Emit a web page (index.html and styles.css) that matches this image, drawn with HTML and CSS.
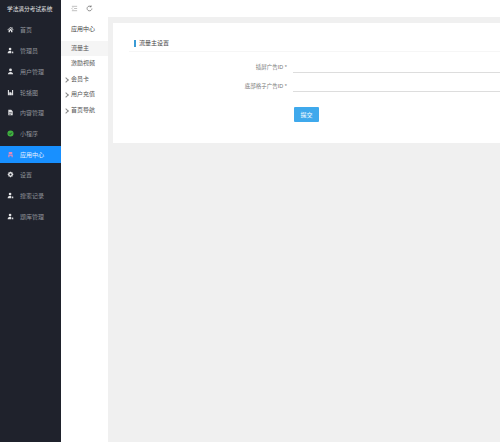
FILE: index.html
```html
<!DOCTYPE html>
<html lang="zh-CN">
<head>
    <meta charset="UTF-8">
    <title>流量主设置</title>
    <link rel="stylesheet" href="styles.css">
</head>
<body>
    <div class="container">
        <div class="sidebar">
            <div class="brand">学法满分考试系统</div>
            <a href="#" class="menu-item">
                <svg viewBox="0 0 16 16"><path d="M8 2 1 8.500l1 1L8 4l6 5.500 1-1-2.500-2.300V3h-2v1.400zM3.500 10v4.500h3.300v-3.400h2.400v3.400h3.300V10L8 5.800z"/></svg>
                <span>首页</span>
            </a>
            <a href="#" class="menu-item">
                <svg viewBox="0 0 16 16"><circle cx="7" cy="4.500" r="3"/><path d="M1.500 14c0-3.500 2-5.500 5.500-5.500 1 0 1.800.2 2.500.5v5zM11 10h3.500v1H13v1h1.500v2.500H11z"/></svg>
                <span>管理员</span>
            </a>
            <a href="#" class="menu-item">
                <svg viewBox="0 0 16 16"><circle cx="8" cy="4.500" r="3.200"/><path d="M2 14.500c0-3.500 2.500-5.500 6-5.500s6 2 6 5.500z"/></svg>
                <span>用户管理</span>
            </a>
            <a href="#" class="menu-item">
                <svg viewBox="0 0 16 16"><path d="M2 2h2.500v12H2zM11.500 2H14v12h-2.500zM5 9l1.500-3L8 8l1-1.500L11 10v4H5z"/></svg>
                <span>轮播图</span>
            </a>
            <a href="#" class="menu-item">
                <svg viewBox="0 0 16 16"><path d="M3 1.500h6.500L13 5v9.500H3zM5 7v1h6V7zm0 2.500v1h6v-1zM5 12v1h4v-1z"/></svg>
                <span>内容管理</span>
            </a>
            <a href="#" class="menu-item">
                <svg viewBox="0 0 16 16"><circle cx="8" cy="8" r="7" fill="#3fb33f"/><path d="m4.800 8.200 2.200 2.200 4-4.400" fill="none" stroke="#1f222c" stroke-width="1.800"/></svg>
                <span>小程序</span>
            </a>
            <a href="#" class="menu-item active">
                <svg viewBox="0 0 16 16"><path fill="#e889b5" d="M4 2h8v5H4zM3 8h10v6h-2.500v-3h-5v3H3z"/></svg>
                <span>应用中心</span>
            </a>
            <a href="#" class="menu-item">
                <svg viewBox="0 0 16 16"><path fill-rule="evenodd" d="m6.700 1.500h2.600l.4 2 1.700-1 1.900 1.900-1 1.700 2 .4v2.600l-2 .4 1 1.700-1.900 1.900-1.700-1-.4 2H6.700l-.4-2-1.700 1-1.900-1.900 1-1.700-2-.4V6.500l2-.4-1-1.700 1.900-1.900 1.700 1zM8 5.700a2.300 2.300 0 1 0 0 4.600 2.300 2.300 0 0 0 0-4.600z"/></svg>
                <span>设置</span>
            </a>
            <a href="#" class="menu-item">
                <svg viewBox="0 0 16 16"><circle cx="7" cy="4.500" r="3"/><path d="M1.500 14c0-3.500 2-5.500 5.500-5.500 1 0 1.800.2 2.500.5v5zM11 10h3.500v1H13v1h1.500v2.500H11z"/></svg>
                <span>搜索记录</span>
            </a>
            <a href="#" class="menu-item">
                <svg viewBox="0 0 16 16"><circle cx="7" cy="4.500" r="3"/><path d="M1.500 14c0-3.500 2-5.500 5.500-5.500 1 0 1.800.2 2.500.5v5zM11 10h3.500v1H13v1h1.500v2.500H11z"/></svg>
                <span>题库管理</span>
            </a>
        </div>

        <div class="main">
            <div class="topbar">
                <svg class="tool" viewBox="0 0 16 16"><path d="M2 3h12M7 8h7M2 13h12M4.500 5.500 2 8l2.500 2.500" fill="none" stroke="#888" stroke-width="1.200"/></svg>
                <svg class="tool" viewBox="0 0 16 16"><path d="M13.500 8A5.500 5.500 0 1 1 11.500 3.700M11.800 1v3.200H8.600" fill="none" stroke="#555" stroke-width="1.400"/></svg>
            </div>
            <div class="body-row">
                <div class="subnav">
                    <div class="subnav-title">应用中心</div>
                    <a href="#" class="subnav-item current">流量主</a>
                    <a href="#" class="subnav-item">激励视频</a>
                    <a href="#" class="subnav-item arrow">会员卡</a>
                    <a href="#" class="subnav-item arrow">用户充值</a>
                    <a href="#" class="subnav-item arrow">首页导航</a>
                </div>
                <div class="content">
                    <div class="card">
                        <div class="card-header"><span class="card-title">流量主设置</span></div>
                        <form class="form">
                            <div class="form-row">
                                <label>插屏广告ID *</label>
                                <input type="text">
                            </div>
                            <div class="form-row">
                                <label>底部格子广告ID *</label>
                                <input type="text">
                            </div>
                            <button type="button" class="submit">提交</button>
                        </form>
                    </div>
                </div>
            </div>
        </div>
    </div>
</body>
</html>
```

FILE: styles.css
```css
* {
    margin: 0;
    padding: 0;
    box-sizing: border-box;
}

body {
    font-family: "Liberation Sans", "Noto Sans CJK SC", sans-serif;
    font-size: 6px;
    background-color: #f0f0f0;
    color: #666;
    overflow: hidden;
}

.container {
    display: flex;
    width: 500px;
    height: 442px;
}

/* Sidebar */
.sidebar {
    display: flex;
    flex-direction: column;
    gap: 3.7px;
    width: 61px;
    flex-shrink: 0;
    background-color: #1f222c;
}

.brand {
    height: 17.8px;
    line-height: 18px;
    padding-left: 7px;
    color: #e4e5e7;
    font-size: 5.7px;
    white-space: nowrap;
}

.menu-item {
    display: flex;
    align-items: center;
    gap: 6px;
    height: 17px;
    padding-left: 7px;
    color: #8f9299;
    text-decoration: none;
}

.menu-item svg {
    width: 7px;
    height: 7px;
    fill: #e2e3e5;
}

.menu-item.active {
    background-color: #1890ff;
    color: #e8f3ff;
}

/* Main area */
.main {
    display: flex;
    flex-direction: column;
    flex: 1;
    min-width: 0;
}

.topbar {
    display: flex;
    align-items: center;
    gap: 8px;
    height: 17px;
    padding-left: 10px;
    background-color: #fff;
}

.tool {
    width: 7px;
    height: 7px;
}

.body-row {
    display: flex;
    flex: 1;
}

/* Second level menu */
.subnav {
    width: 47px;
    flex-shrink: 0;
    background-color: #fff;
}

.subnav-title {
    height: 23.5px;
    padding: 9px 0 0 10px;
    color: #444;
    line-height: 7px;
}

.subnav-item {
    display: block;
    height: 15.5px;
    line-height: 15.5px;
    padding-left: 10px;
    color: #555;
    text-decoration: none;
}

.subnav-item.current {
    background-color: #f5f5f5;
}

.subnav-item.arrow {
    position: relative;
}

.subnav-item.arrow::before {
    content: "";
    position: absolute;
    left: 3px;
    top: 6px;
    width: 3px;
    height: 3px;
    border-top: 1px solid #888;
    border-right: 1px solid #888;
    transform: rotate(45deg);
}

.content {
    flex: 1;
    padding: 6px 0 0 5px;
}

.card {
    height: 120px;
    background-color: #fff;
}

.card-header {
    height: 29px;
    margin-left: 16px;
    padding: 17px 0 0 5px;
    border-bottom: 1px solid #f6f6f6;
}

.card-title {
    display: block;
    border-left: 2px solid #3a9bd5;
    padding-left: 3px;
    color: #444;
    line-height: 7px;
}

.form {
    padding-top: 2px;
}

.form-row {
    display: flex;
    align-items: flex-end;
    height: 19px;
}

.form-row label {
    width: 174px;
    text-align: right;
    padding-bottom: 2px;
    color: #777;
    font-size: 5.5px;
}

.form-row input {
    flex: 1;
    height: 18px;
    margin-left: 6px;
    border: none;
    border-bottom: 1px solid #ddd;
    outline: none;
}

.submit {
    display: block;
    width: 25px;
    height: 15px;
    margin: 15px 0 0 181px;
    background-color: #3fa9ec;
    border: none;
    border-radius: 1px;
    color: #fff;
    font-family: inherit;
    font-size: 6px;
}
```
